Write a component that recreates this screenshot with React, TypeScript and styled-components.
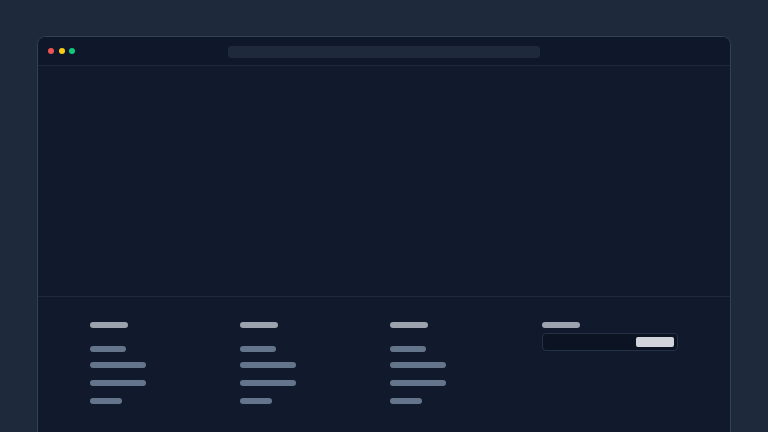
import React from 'react';
import styled, {createGlobalStyle} from "styled-components";

const GlobalStyle = createGlobalStyle`
    html, body {
        margin: 0;
        padding: 0;
        background: #1e293b;
        overflow: hidden;
        font-family: "Liberation Sans", Arial, sans-serif;
    }
`

const columns = [
    {id: 'product', links: [36, 56, 56, 32]},
    {id: 'company', links: [36, 56, 56, 32]},
    {id: 'resources', links: [36, 56, 56, 32]},
]

export default function App() {
    return (
        <>
            <GlobalStyle/>
            <Page>
                <Window>
                    <TitleBar>
                        <Dots>
                            <Dot $color={"#f05252"}/>
                            <Dot $color={"#facc15"}/>
                            <Dot $color={"#10c97b"}/>
                        </Dots>
                        <AddressBar/>
                        <span/>
                    </TitleBar>
                    <Hero/>
                    <Footer>
                        {columns.map(col => (
                            <Column key={col.id}>
                                <Heading/>
                                <LinkList>
                                    {col.links.map((w, i) => (
                                        <LinkBar key={i} $width={w}/>
                                    ))}
                                </LinkList>
                            </Column>
                        ))}
                        <Column>
                            <Heading/>
                            <Subscribe>
                                <SubscribeButton/>
                            </Subscribe>
                        </Column>
                    </Footer>
                </Window>
            </Page>
        </>
    );
}

const Page = styled.div`
    height: 432px;
    padding: 36px 37px 0;
    box-sizing: border-box;
    display: flex;
    flex-direction: column;
    overflow: hidden;
`
const Window = styled.div`
    flex: 1;
    background: #111a2c;
    border: 1px solid #334155;
    border-bottom: none;
    border-radius: 9px 9px 0 0;
    overflow: hidden;
`
const TitleBar = styled.div`
    height: 29px;
    box-sizing: border-box;
    padding-top: 2px;
    display: grid;
    grid-template-columns: 1fr 312px 1fr;
    align-items: center;
    background: #0f172a;
    border-bottom: 1px solid #1e293b;
`
const Dots = styled.div`
    display: flex;
    gap: 4.5px;
    padding-left: 10px;
    margin-top: -2px;
`
const Dot = styled.span<{ $color: string }>`
    width: 6px;
    height: 6px;
    border-radius: 50%;
    background: ${p => p.$color};
`
const AddressBar = styled.div`
    height: 12px;
    border-radius: 3px;
    background: #1e293b;
`
const Hero = styled.div`
    height: 230px;
    border-bottom: 1px solid #1e293b;
`
const Footer = styled.footer`
    display: grid;
    grid-template-columns: 150px 150px 152px 136px;
    padding: 25px 52px 0;
`
const Column = styled.div`
    display: flex;
    flex-direction: column;
    align-items: flex-start;
`
const Heading = styled.div`
    width: 38px;
    height: 6px;
    border-radius: 3px;
    background: #9ca3af;
`
const LinkList = styled.div`
    display: flex;
    flex-direction: column;
    gap: 12px;
    margin-top: 18px;

    & > :first-child {
        margin-bottom: -2px;
    }
`
const LinkBar = styled.div<{ $width: number }>`
    width: ${p => p.$width}px;
    height: 6px;
    border-radius: 3px;
    background: #64748b;
`
const Subscribe = styled.div`
    margin-top: 5px;
    width: 136px;
    height: 18px;
    box-sizing: border-box;
    border: 1px solid #243247;
    border-radius: 4px;
    background: #0c1322;
    display: flex;
    justify-content: flex-end;
    align-items: center;
    padding-right: 3px;
`
const SubscribeButton = styled.div`
    width: 38px;
    height: 10px;
    border-radius: 2px;
    background: #d1d5db;
`
